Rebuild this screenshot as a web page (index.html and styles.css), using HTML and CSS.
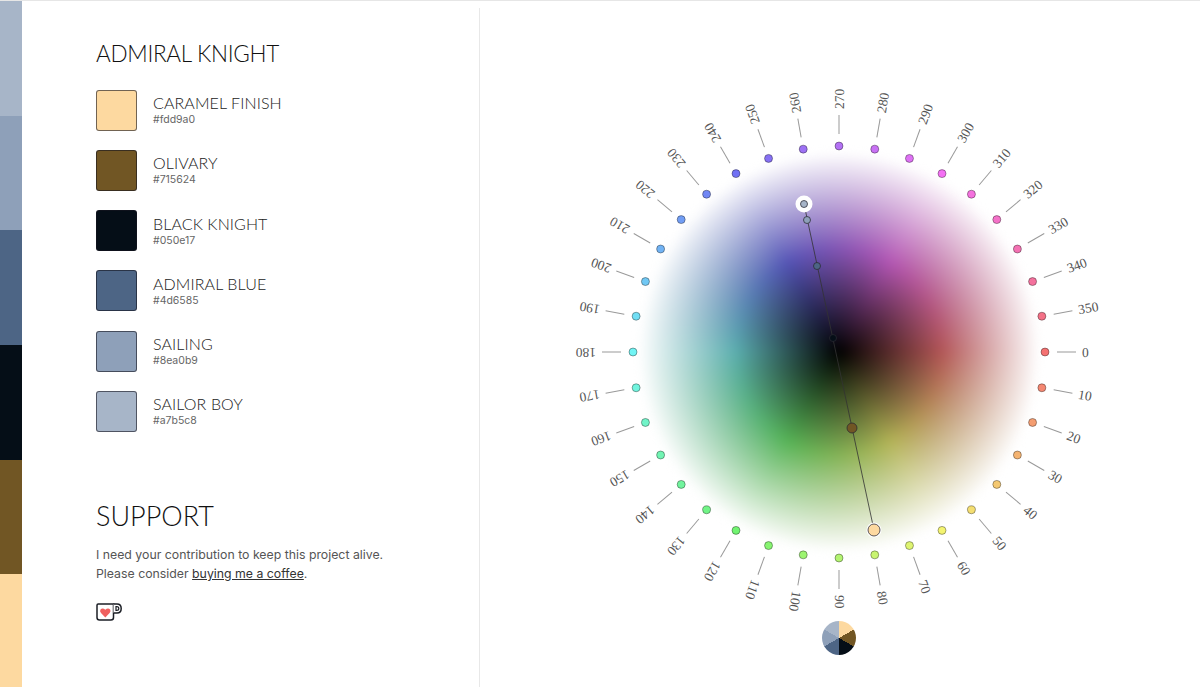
FILE: index.html
```html
<!DOCTYPE html>
<html lang="en">

<head>
    <meta charset="UTF-8">
    <meta name="viewport" content="width=device-width, initial-scale=1.0">
    <title>Admiral Knight</title>
    <link rel="stylesheet" href="styles.css">
</head>

<body>
    <div class="strip">
        <div class="strip-band band-sailor"></div>
        <div class="strip-band band-sailing"></div>
        <div class="strip-band band-admiral"></div>
        <div class="strip-band band-black"></div>
        <div class="strip-band band-olivary"></div>
        <div class="strip-band band-caramel"></div>
    </div>

    <aside class="sidebar">
        <h2 class="palette-title">ADMIRAL KNIGHT</h2>
        <ul class="palette">
            <li class="color"><span class="swatch band-caramel"></span>
                <div class="color-text"><p class="color-name">CARAMEL FINISH</p><p class="color-hex">#fdd9a0</p></div></li>
            <li class="color"><span class="swatch band-olivary"></span>
                <div class="color-text"><p class="color-name">OLIVARY</p><p class="color-hex">#715624</p></div></li>
            <li class="color"><span class="swatch band-black"></span>
                <div class="color-text"><p class="color-name">BLACK KNIGHT</p><p class="color-hex">#050e17</p></div></li>
            <li class="color"><span class="swatch band-admiral"></span>
                <div class="color-text"><p class="color-name">ADMIRAL BLUE</p><p class="color-hex">#4d6585</p></div></li>
            <li class="color"><span class="swatch band-sailing"></span>
                <div class="color-text"><p class="color-name">SAILING</p><p class="color-hex">#8ea0b9</p></div></li>
            <li class="color"><span class="swatch band-sailor"></span>
                <div class="color-text"><p class="color-name">SAILOR BOY</p><p class="color-hex">#a7b5c8</p></div></li>
        </ul>

        <h2 class="support-title">SUPPORT</h2>
        <p class="support-text">I need your contribution to keep this project alive.<br>
            Please consider <a href="#">buying me a coffee</a>.</p>
        <svg class="mug" width="26" height="18" viewBox="0 0 26 18">
            <path d="M1 2.2 Q1 1 2.2 1 H17.5 V14.5 Q17.5 17 15 17 H3.5 Q1 17 1 14.5 Z" fill="#fff" stroke="#1c1f26" stroke-width="1.5"/>
            <path d="M17.5 1 H21 Q25.2 1 25.2 5.5 Q25.2 10 21 10 H17.5" fill="#fff" stroke="#1c1f26" stroke-width="1.5"/>
            <path d="M20 3.6 H20.8 Q22.8 3.6 22.8 5.5 Q22.8 7.4 20.8 7.4 H20 Z" fill="#fff" stroke="#1c1f26" stroke-width="1.2"/>
            <path d="M9.3 14.5 L5 10 Q3.4 8.2 4.5 6.5 Q6.6 4.4 9.3 6.8 Q12 4.4 14.1 6.5 Q15.2 8.2 13.6 10 Z" fill="#f0605f"/>
        </svg>
    </aside>

    <main class="canvas">
        <div class="wheel"></div>
        <svg class="dial" id="dial" width="720" height="687" viewBox="0 0 720 687"></svg>
        <div class="mini-pie"></div>
    </main>

    <script src="script.js"></script>
</body>

</html>
```

FILE: styles.css
```css
* {
    box-sizing: border-box;
}

body {
    margin: 0;
    height: 687px;
    display: flex;
    overflow: hidden;
    background: #fff;
    border-top: 1px solid #e6e6e6;
    font-family: Inter, "Liberation Sans", sans-serif;
    color: #444;
}

.strip {
    width: 22px;
    height: 688px;
    flex-shrink: 0;
    display: flex;
    flex-direction: column;
}

.strip-band {
    flex: 1;
}

.band-caramel { background-color: #fdd9a0; }
.band-olivary { background-color: #715624; }
.band-black { background-color: #050e17; }
.band-admiral { background-color: #4d6585; }
.band-sailing { background-color: #8ea0b9; }
.band-sailor { background-color: #a7b5c8; }

.sidebar {
    width: 458px;
    margin-top: 7px;
    padding: 32px 0 0 74px;
    border-right: 1px solid #e8e8e8;
}

.palette-title,
.support-title,
.color-name {
    font-family: Lato, "Liberation Sans", sans-serif;
    font-weight: 300;
    margin: 0;
}

.palette-title {
    font-size: 22.5px;
    line-height: 28px;
    color: #111;
    letter-spacing: -0.3px;
}

.palette {
    list-style: none;
    margin: 21.5px 0 0;
    padding: 0;
}

.color {
    display: flex;
    align-items: center;
    gap: 16px;
    height: 41px;
    margin-bottom: 19.3px;
}

.swatch {
    width: 41px;
    height: 41px;
    border: 1px solid rgba(20, 20, 30, 0.6);
    border-radius: 3px;
}

.color-text {
    padding-bottom: 1px;
}

.color-name {
    font-size: 16px;
    line-height: 19px;
    letter-spacing: 0.1px;
    color: #222;
    margin-bottom: 2px;
}

.color-hex {
    margin: 0;
    font-size: 10.5px;
    line-height: 12px;
    color: #666;
}

.support-title {
    margin-top: 65px;
    font-size: 27px;
    line-height: 38px;
    color: #111;
}

.support-text {
    margin: 10px 0 0;
    font-size: 12.3px;
    line-height: 19px;
    color: #555;
}

.support-text a {
    color: #333;
}

.mug {
    display: block;
    margin-top: 20px;
}

.canvas {
    position: relative;
    flex: 1;
    margin-top: -1px;
}

.wheel {
    position: absolute;
    left: 153px;
    top: 146px;
    width: 412px;
    height: 412px;
    border-radius: 50%;
    background:
        radial-gradient(circle closest-side, #000 0%, rgba(0, 0, 0, 0) 50%, rgba(255, 255, 255, 0) 50%, #fff 97%),
        conic-gradient(from 90deg,
            hsl(0, 38%, 52%), hsl(60, 38%, 52%), hsl(120, 38%, 52%), hsl(180, 34%, 52%),
            hsl(240, 40%, 52%), hsl(300, 38%, 52%), hsl(360, 38%, 52%));
    filter: blur(5px);
}

.dial {
    position: absolute;
    left: 0;
    top: 0;
}

.tick {
    stroke: #999;
    stroke-width: 1;
}

.tick-label {
    font-family: "Liberation Serif", serif;
    font-size: 13.5px;
    fill: #555;
    dominant-baseline: central;
    text-rendering: geometricPrecision;
}

.hue-dot {
    stroke: rgba(0, 0, 0, 0.35);
    stroke-width: 1;
}

.path-line {
    stroke: #333;
    stroke-width: 1;
    opacity: 0.8;
}

.path-dot {
    stroke: rgba(40, 40, 50, 0.75);
    stroke-width: 1;
}

.mini-pie {
    position: absolute;
    left: 342px;
    top: 621px;
    width: 34px;
    height: 34px;
    border-radius: 50%;
    background: conic-gradient(#fdd9a0 0 60deg, #715624 60deg 120deg, #050e17 120deg 180deg,
        #4d6585 180deg 240deg, #8ea0b9 240deg 300deg, #a7b5c8 300deg 360deg);
}
```

FILE: script.js
```js
var dial = document.getElementById("dial");
var cx = 359;
var cy = 352;

function add(tag, attrs, text) {
    var el = document.createElementNS("http://www.w3.org/2000/svg", tag);
    for (var key in attrs) {
        el.setAttribute(key, attrs[key]);
    }
    if (text !== undefined) {
        el.textContent = text;
    }
    dial.appendChild(el);
}

// hue ring, one dot every 10 degrees
for (var hue = 0; hue < 360; hue += 10) {
    var turn = "rotate(" + hue + " " + cx + " " + cy + ")";
    add("line", { class: "tick", x1: cx + 218, y1: cy, x2: cx + 237, y2: cy, transform: turn });
    add("text", { class: "tick-label", x: cx + 243, y: cy, transform: turn }, hue);
    add("circle", {
        class: "hue-dot",
        cx: cx + 206 * Math.cos(hue * Math.PI / 180),
        cy: cy + 206 * Math.sin(hue * Math.PI / 180),
        r: 4,
        fill: "hsl(" + hue + ", 85%, 70%)"
    });
}

// palette colours on the wheel, x is relative to the canvas
var points = [
    { x: 324, y: 204, r: 3.5, fill: "#a7b5c8", halo: 8.5 },
    { x: 327, y: 220, r: 3.5, fill: "#8ea0b9" },
    { x: 337, y: 266, r: 3.5, fill: "#4d6585" },
    { x: 353, y: 338, r: 3.5, fill: "#050e17" },
    { x: 372, y: 428, r: 5, fill: "#715624" },
    { x: 394, y: 530, r: 6, fill: "#fdd9a0", halo: 7.5 }
];

add("line", { class: "path-line", x1: 324, y1: 204, x2: 394, y2: 530 });
points.forEach(function (p) {
    if (p.halo) {
        add("circle", { cx: p.x, cy: p.y, r: p.halo, fill: "#fff" });
    }
    add("circle", { class: "path-dot", cx: p.x, cy: p.y, r: p.r, fill: p.fill });
});
```
